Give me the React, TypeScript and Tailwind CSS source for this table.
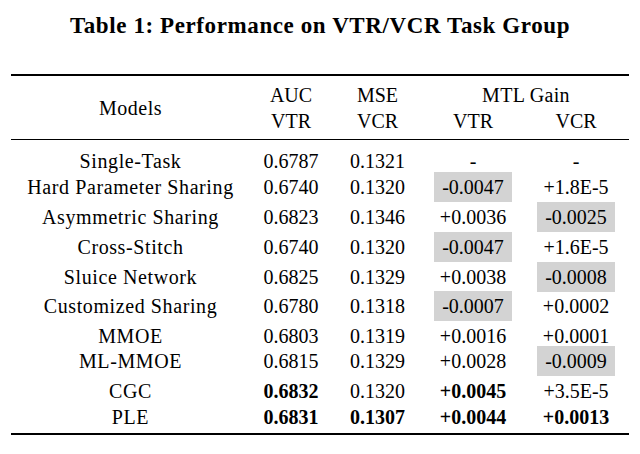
import React from "react";

type Row = {
  n: string;
  a: string;
  m: string;
  v: string;
  c: string;
  hv?: boolean;
  hc?: boolean;
  ba?: boolean;
  bm?: boolean;
  bv?: boolean;
  bc?: boolean;
  h: string;
};

const rows: Row[] = [
  { n: "Single-Task", a: "0.6787", m: "0.1321", v: "-", c: "-", h: "h-[26px]" },
  { n: "Hard Parameter Sharing", a: "0.6740", m: "0.1320", v: "-0.0047", c: "+1.8E-5", hv: true, h: "h-[30px]" },
  { n: "Asymmetric Sharing", a: "0.6823", m: "0.1346", v: "+0.0036", c: "-0.0025", hc: true, h: "h-[30px]" },
  { n: "Cross-Stitch", a: "0.6740", m: "0.1320", v: "-0.0047", c: "+1.6E-5", hv: true, h: "h-[30px]" },
  { n: "Sluice Network", a: "0.6825", m: "0.1329", v: "+0.0038", c: "-0.0008", hc: true, h: "h-[29px]" },
  { n: "Customized Sharing", a: "0.6780", m: "0.1318", v: "-0.0007", c: "+0.0002", hv: true, h: "h-[30px]" },
  { n: "MMOE", a: "0.6803", m: "0.1319", v: "+0.0016", c: "+0.0001", h: "h-[25px]" },
  { n: "ML-MMOE", a: "0.6815", m: "0.1329", v: "+0.0028", c: "-0.0009", hc: true, h: "h-[30px]" },
  { n: "CGC", a: "0.6832", m: "0.1320", v: "+0.0045", c: "+3.5E-5", ba: true, bv: true, h: "h-[26px]" },
  { n: "PLE", a: "0.6831", m: "0.1307", v: "+0.0044", c: "+0.0013", ba: true, bm: true, bv: true, bc: true, h: "h-[26px]" },
];

function Cell({ text, bold, hl }: { text: string; bold?: boolean; hl?: boolean }) {
  return (
    <div className="flex h-full items-center justify-center">
      <div
        className={
          "flex h-full w-[78px] items-center justify-center " +
          (hl ? "bg-[#d3d3d3] " : "") +
          (bold ? "font-bold" : "")
        }
      >
        {text}
      </div>
    </div>
  );
}

export default function App() {
  return (
    <div className="h-[454px] w-[640px] bg-white text-black font-['Liberation_Serif',serif]">
      <div className="pt-[12px] text-center text-[23px] font-bold leading-[28px] tracking-[0.6px]">
        Table 1: Performance on VTR/VCR Task Group
      </div>
      <div className="ml-[11px] mt-[34px] w-[618px] border-t-2 border-b-2 border-black pb-[5px] text-[20px]">
        <div className="grid h-[64px] grid-cols-[239px_82px_91px_100px_106px] border-b border-black leading-[26px]">
          <div className="flex items-center justify-center tracking-[0.5px]">Models</div>
          <div className="flex flex-col items-center justify-center">
            <div>AUC</div>
            <div>VTR</div>
          </div>
          <div className="flex flex-col items-center justify-center">
            <div>MSE</div>
            <div>VCR</div>
          </div>
          <div className="col-span-2 flex flex-col justify-center">
            <div className="text-center tracking-[0.3px]">MTL Gain</div>
            <div className="grid grid-cols-[100px_106px]">
              <div className="text-center">VTR</div>
              <div className="text-center">VCR</div>
            </div>
          </div>
        </div>
        <div className="pt-[6px]">
          {rows.map((r) => (
            <div key={r.n} className={"grid grid-cols-[239px_82px_91px_100px_106px] " + r.h}>
              <div className="flex items-center justify-center tracking-[0.6px]">{r.n}</div>
              <Cell text={r.a} bold={r.ba} />
              <Cell text={r.m} bold={r.bm} />
              <Cell text={r.v} bold={r.bv} hl={r.hv} />
              <Cell text={r.c} bold={r.bc} hl={r.hc} />
            </div>
          ))}
        </div>
      </div>
    </div>
  );
}
